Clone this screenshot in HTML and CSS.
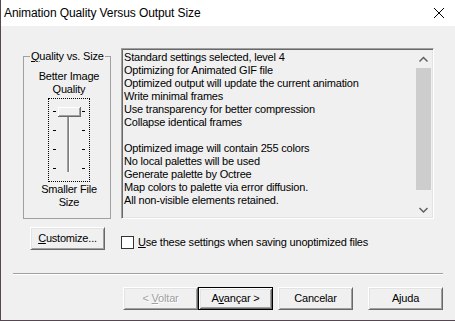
FILE: index.html
```html
<!DOCTYPE html>
<html lang="en">

<head>
    <meta charset="UTF-8">
    <meta name="viewport" content="width=device-width, initial-scale=1.0">
    <title>Animation Quality Versus Output Size</title>
    <link rel="stylesheet" href="styles.css">
</head>

<body>
    <div class="window">
        <div class="titlebar">
            <span class="title">Animation Quality Versus Output Size</span>
            <svg class="close" width="10" height="10" viewBox="0 0 10 10">
                <path d="M0 0L10 10M10 0L0 10" stroke="#000" stroke-width="1" fill="none" />
            </svg>
        </div>

        <div class="content">
            <div class="main-row">
                <fieldset class="group">
                    <legend><u>Q</u>uality vs. Size</legend>
                    <div class="group-body">
                        <div class="caption">Better Image<br>Quality</div>
                        <div class="trackbar">
                            <svg width="40" height="82" viewBox="0 0 40 82">
                                <!-- ticks -->
                                <rect x="4" y="12" width="3" height="1" fill="#000" />
                                <rect x="4" y="31" width="3" height="1" fill="#000" />
                                <rect x="4" y="50" width="3" height="1" fill="#000" />
                                <rect x="4" y="69" width="3" height="1" fill="#000" />
                                <rect x="33" y="12" width="3" height="1" fill="#000" />
                                <rect x="33" y="31" width="3" height="1" fill="#000" />
                                <rect x="33" y="50" width="3" height="1" fill="#000" />
                                <rect x="33" y="69" width="3" height="1" fill="#000" />
                                <!-- channel -->
                                <rect x="18" y="9" width="1" height="64" fill="#a0a0a0" />
                                <rect x="19" y="9" width="1" height="64" fill="#808080" />
                                <rect x="20" y="9" width="1" height="64" fill="#fff" />
                                <!-- thumb -->
                                <rect x="9" y="8" width="23" height="10" fill="#f0f0f0" />
                                <rect x="9" y="8" width="22" height="1" fill="#fff" />
                                <rect x="9" y="8" width="1" height="9" fill="#fff" />
                                <rect x="10" y="16" width="21" height="1" fill="#a0a0a0" />
                                <rect x="30" y="9" width="1" height="8" fill="#a0a0a0" />
                                <rect x="9" y="17" width="23" height="1" fill="#696969" />
                                <rect x="31" y="8" width="1" height="10" fill="#696969" />
                            </svg>
                        </div>
                        <div class="caption caption-bottom">Smaller File<br>Size</div>
                    </div>
                </fieldset>

                <div class="listbox">
                    <div class="list-text">
                        <div class="line">Standard settings selected, level 4</div>
                        <div class="line">Optimizing for Animated GIF file</div>
                        <div class="line">Optimized output will update the current animation</div>
                        <div class="line">Write minimal frames</div>
                        <div class="line">Use transparency for better compression</div>
                        <div class="line">Collapse identical frames</div>
                        <div class="line"></div>
                        <div class="line">Optimized image will contain 255 colors</div>
                        <div class="line">No local palettes will be used</div>
                        <div class="line">Generate palette by Octree</div>
                        <div class="line">Map colors to palette via error diffusion.</div>
                        <div class="line">All non-visible elements retained.</div>
                    </div>
                    <div class="scrollbar">
                        <div class="sb-btn">
                            <svg width="17" height="17" viewBox="0 0 17 17">
                                <path d="M4.5 11.5L8.5 7.5L12.5 11.5" stroke="#606060" stroke-width="1.5" fill="none" />
                            </svg>
                        </div>
                        <div class="sb-thumb"></div>
                        <div class="sb-btn sb-down">
                            <svg width="17" height="17" viewBox="0 0 17 17">
                                <path d="M4.5 8L8.5 12L12.5 8" stroke="#606060" stroke-width="1.5" fill="none" />
                            </svg>
                        </div>
                    </div>
                </div>
            </div>

            <div class="options-row">
                <button class="btn customize-btn"><u>C</u>ustomize...</button>
                <label class="check">
                    <span class="checkbox"></span>
                    <span class="check-label"><u>U</u>se these settings when saving unoptimized files</span>
                </label>
            </div>

            <div class="separator"></div>

            <div class="button-row">
                <button class="btn" disabled>&lt; <u>V</u>oltar</button>
                <button class="btn default-btn">A<u>v</u>ançar &gt;</button>
                <button class="btn cancel-btn">Cancelar</button>
                <button class="btn help-btn">Ajuda</button>
            </div>
        </div>
    </div>
</body>

</html>
```

FILE: styles.css
```css
body {
    margin: 0;
    font-family: "Liberation Sans", Arial, sans-serif;
    font-size: 11px;
    line-height: 13px;
    letter-spacing: -0.2px;
    color: #000;
}

.window {
    width: 455px;
    height: 321px;
    box-sizing: border-box;
    border-left: 1px solid #55474f;
    border-bottom: 1px solid #55474f;
    background-color: #f0f0f0;
    display: flex;
    flex-direction: column;
}

.titlebar {
    height: 26px;
    flex-shrink: 0;
    background-color: #fff;
    display: flex;
    align-items: center;
    justify-content: space-between;
    padding: 0 11px 0 3px;
}

.title {
    font-size: 12px;
    line-height: 16px;
    letter-spacing: -0.1px;
}

.content {
    flex: 1;
    padding: 0 12px 0 11px;
}

.main-row {
    display: flex;
    margin-top: 22px;
    height: 171px;
}

.group {
    width: 88px;
    box-sizing: border-box;
    min-width: 0;
    margin: 2px 0 0 11px;
    padding: 7px 0 0 0;
    border: 1px solid #a0a0a0;
}

.group legend {
    margin-left: 6px;
    padding: 0 1px;
    line-height: 13px;
}

.group-body {
    padding-left: 4px;
    display: flex;
    flex-direction: column;
    align-items: center;
    text-align: center;
}

.trackbar {
    margin-top: 2px;
    border: 1px dotted #000;
    width: 40px;
    height: 82px;
}

.trackbar svg {
    display: block;
}

.caption-bottom {
    margin-top: 1px;
}

.listbox {
    margin-left: 10px;
    width: 313px;
    box-sizing: border-box;
    padding: 1px;
    border: 1px solid;
    border-color: #a0a0a0 #fff #fff #a0a0a0;
    box-shadow: inset 1px 1px 0 #696969, inset -1px -1px 0 #e3e3e3;
    display: flex;
}

.list-text {
    flex: 1;
    padding: 1px 0 0 1px;
    white-space: nowrap;
    overflow: hidden;
}

.line {
    height: 13px;
}

.scrollbar {
    width: 17px;
    display: flex;
    flex-direction: column;
}

.sb-btn {
    height: 17px;
}

.sb-btn svg {
    display: block;
}

.sb-thumb {
    margin: 1px 1px 0;
    height: 122px;
    background-color: #cdcdcd;
}

.sb-down {
    margin-top: auto;
}

.options-row {
    display: flex;
    align-items: flex-start;
    margin-top: 8px;
}

.btn {
    width: 75px;
    height: 23px;
    padding: 0;
    font: inherit;
    letter-spacing: inherit;
    color: #000;
    background-color: #f0f0f0;
    border: 1px solid;
    border-color: #fff #696969 #696969 #fff;
    box-shadow: inset 1px 1px 0 #e3e3e3, inset -1px -1px 0 #a0a0a0;
}

.btn:disabled {
    color: #a0a0a0;
    text-shadow: 1px 1px 0 #fff;
}

.default-btn {
    border-color: #000;
    box-shadow: inset 1px 1px 0 #fff, inset -1px -1px 0 #696969,
        inset 2px 2px 0 #e3e3e3, inset -2px -2px 0 #a0a0a0;
}

.customize-btn {
    margin-left: 18px;
}

.check {
    display: flex;
    align-items: center;
    margin: 9px 0 0 16px;
}

.checkbox {
    width: 13px;
    height: 13px;
    box-sizing: border-box;
    border: 1px solid #333;
    background-color: #fff;
}

.check-label {
    margin-left: 4px;
}

.separator {
    margin: 23px 0 0 1px;
    border-top: 1px solid #a0a0a0;
    border-bottom: 1px solid #fff;
}

.button-row {
    display: flex;
    justify-content: flex-end;
    margin-top: 12px;
}

.cancel-btn {
    margin-left: 5px;
}

.help-btn {
    margin-left: 15px;
}
```
